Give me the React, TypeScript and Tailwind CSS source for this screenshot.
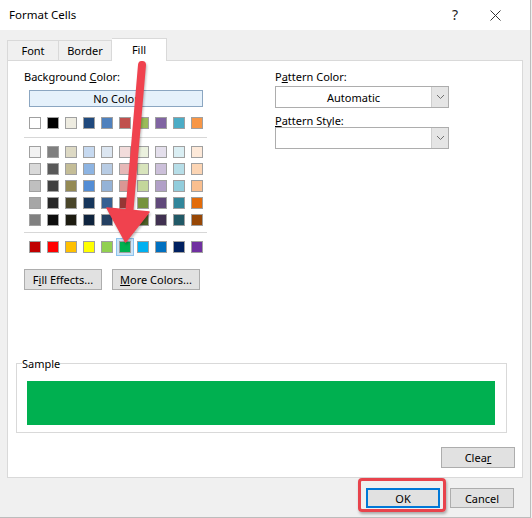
import React from 'react';

const themeRow = [
  'bg-[#ffffff]', 'bg-[#000000]', 'bg-[#eeece1]', 'bg-[#1f497d]', 'bg-[#4f81bd]',
  'bg-[#c0504d]', 'bg-[#9bbb59]', 'bg-[#8064a2]', 'bg-[#4bacc6]', 'bg-[#f79646]',
];

const tintRows = [
  ['bg-[#f2f2f2]', 'bg-[#7f7f7f]', 'bg-[#ddd9c4]', 'bg-[#c6d9f0]', 'bg-[#dce6f1]', 'bg-[#f2dcdb]', 'bg-[#ebf1de]', 'bg-[#e4dfec]', 'bg-[#daeef3]', 'bg-[#fde9d9]'],
  ['bg-[#d9d9d9]', 'bg-[#595959]', 'bg-[#c4bd97]', 'bg-[#8db4e2]', 'bg-[#b8cce4]', 'bg-[#e6b8b7]', 'bg-[#d8e4bc]', 'bg-[#ccc0da]', 'bg-[#b7dee8]', 'bg-[#fcd5b4]'],
  ['bg-[#bfbfbf]', 'bg-[#404040]', 'bg-[#948a54]', 'bg-[#538dd5]', 'bg-[#95b3d7]', 'bg-[#da9694]', 'bg-[#c4d79b]', 'bg-[#b1a0c7]', 'bg-[#92cddc]', 'bg-[#fabf8f]'],
  ['bg-[#a6a6a6]', 'bg-[#262626]', 'bg-[#494529]', 'bg-[#16365c]', 'bg-[#366092]', 'bg-[#963634]', 'bg-[#76933c]', 'bg-[#60497a]', 'bg-[#31869b]', 'bg-[#e26b0a]'],
  ['bg-[#808080]', 'bg-[#0d0d0d]', 'bg-[#1d1b10]', 'bg-[#0f243e]', 'bg-[#244062]', 'bg-[#632523]', 'bg-[#4f6228]', 'bg-[#403151]', 'bg-[#215967]', 'bg-[#974706]'],
];

const standardRow = [
  'bg-[#c00000]', 'bg-[#ff0000]', 'bg-[#ffc000]', 'bg-[#ffff00]', 'bg-[#92d050]',
  'bg-[#00b050]', 'bg-[#00b0f0]', 'bg-[#0070c0]', 'bg-[#002060]', 'bg-[#7030a0]',
];

const Swatch = ({ color, selected }: { color: string; selected?: boolean }) => (
  <div
    className={`w-[12px] h-[12px] border border-[#a0a0a0] ${color} ${
      selected ? 'shadow-[0_0_0_2px_#cce4f7,0_0_0_3px_#8cc3ee]' : ''
    }`}
  />
);

const SwatchRow = ({ colors, selectedIndex }: { colors: string[]; selectedIndex?: number }) => (
  <div className="flex gap-[6px]">
    {colors.map((c, i) => (
      <Swatch key={i} color={c} selected={i === selectedIndex} />
    ))}
  </div>
);

const Chevron = () => (
  <svg width="9" height="6" viewBox="0 0 9 6">
    <polyline points="1,1 4.5,4.5 8,1" fill="none" stroke="#707070" strokeWidth="1" />
  </svg>
);

const Combo = ({ value }: { value?: string }) => (
  <div className="flex w-[174px] h-[22px] border border-[#adadad] bg-white">
    <div className="flex-1 flex items-center justify-center leading-none">{value}</div>
    <div className="w-[17px] flex items-center justify-center bg-[#e5e5e5] border-l border-[#cfcfcf]">
      <Chevron />
    </div>
  </div>
);

const WinButton = ({ children, className = '' }: { children: React.ReactNode; className?: string }) => (
  <button
    className={`h-[21px] flex items-center justify-center bg-[#e1e1e1] border border-[#adadad] leading-none ${className}`}
  >
    {children}
  </button>
);

export default function App() {
  return (
    <div className="relative w-[532px] h-[518px] overflow-hidden bg-[#f0f0f0] font-['Noto_Sans',sans-serif] text-[11px] text-black">
      <div className="flex flex-col w-[531px] h-[518px] border-r border-b border-[#bcbcbc]">
        {/* Title bar */}
        <div className="flex items-center h-[30px] bg-white pl-[9px]">
          <span className="text-[11.5px]">Format Cells</span>
          <span className="ml-auto text-[14px] leading-none text-[#222]">?</span>
          <div className="w-[72px] flex justify-center pl-[2px]">
            <svg width="11" height="11" viewBox="0 0 11 11">
              <path d="M0.5 0.5 L10.5 10.5 M10.5 0.5 L0.5 10.5" stroke="#333" strokeWidth="1" />
            </svg>
          </div>
        </div>

        <div className="flex flex-col px-[7px] pt-[8px]">
          {/* Tabs */}
          <div className="flex items-end h-[22px] relative z-10">
            <div className="w-[52px] h-[20px] border border-b-0 border-[#d9d9d9] flex items-center justify-center pt-[1px]">Font</div>
            <div className="w-[53px] h-[20px] border border-b-0 border-l-0 border-[#d9d9d9] flex items-center justify-center pt-[1px]">Border</div>
            <div className="w-[55px] h-[23px] -mb-px border border-b-0 border-l-0 border-[#d9d9d9] bg-white flex items-center justify-center">Fill</div>
          </div>

          {/* Panel */}
          <div className="flex flex-col w-[516px] h-[418px] border border-[#d9d9d9] bg-white">
            <div className="flex pl-[16px] pt-[9px]">
              {/* Left column */}
              <div className="flex flex-col w-[184px]">
                <div className="leading-[13px] h-[13px]">
                  Background <span className="underline">C</span>olor:
                </div>
                <div className="mt-[7px] ml-[5px] w-[174px] h-[17px] flex items-center justify-center bg-[#e5f1fb] border border-[#8ba6c1] leading-none">
                  No Color
                </div>
                <div className="mt-[10px] ml-[5px]">
                  <SwatchRow colors={themeRow} />
                </div>
                <div className="mt-[8px] h-px w-[183px] bg-[#d7d7d7]" />
                <div className="mt-[8px] ml-[5px] flex flex-col gap-[5px]">
                  {tintRows.map((row, i) => (
                    <SwatchRow key={i} colors={row} />
                  ))}
                </div>
                <div className="mt-[6px] h-px w-[183px] bg-[#d7d7d7]" />
                <div className="mt-[8px] ml-[5px]">
                  <SwatchRow colors={standardRow} selectedIndex={5} />
                </div>
                <div className="mt-[16px] flex gap-[10px]">
                  <WinButton className="w-[78px]">
                    F<span className="underline">i</span>ll Effects...
                  </WinButton>
                  <WinButton className="w-[88px]">
                    <span className="underline">M</span>ore Colors...
                  </WinButton>
                </div>
              </div>

              {/* Right column */}
              <div className="flex flex-col ml-[67px]">
                <div className="leading-[13px] h-[13px]">
                  P<span className="underline">a</span>ttern Color:
                </div>
                <div className="mt-[3px]">
                  <Combo value="Automatic" />
                </div>
                <div className="mt-[6px] leading-[13px] h-[13px]">
                  <span className="underline">P</span>attern Style:
                </div>
                <div className="mt-0">
                  <Combo />
                </div>
              </div>
            </div>

            {/* Sample */}
            <fieldset className="mt-auto ml-[8px] w-[491px] border border-[#d9d9d9] pl-[10px] pr-[11px] pb-[7px] pt-[11px]">
              <legend className="-ml-[5px] leading-[13px]">Sample</legend>
              <div className="h-[44px] bg-[#00b050]" />
            </fieldset>
            <div className="flex justify-end mt-[14px] mb-[9px] pr-[7px]">
              <WinButton className="w-[74px]">
                Clea<span className="underline">r</span>
              </WinButton>
            </div>
          </div>

          {/* Dialog buttons */}
          <div className="flex justify-end gap-[10px] mt-[10px] pr-[9px]">
            <div className="relative">
              <button className="w-[74px] h-[20px] flex items-center justify-center bg-[#e1e1e1] border-2 border-[#0078d7] leading-none">
                OK
              </button>
              <div className="absolute -left-[8px] -top-[10px] w-[88px] h-[34px] rounded-[4px] border-[3px] border-[#e8434c] shadow-[1px_2px_3px_rgba(0,0,0,0.3)] pointer-events-none" />
            </div>
            <button className="w-[64px] h-[20px] flex items-center justify-center bg-[#e1e1e1] border border-[#adadad] leading-none">
              Cancel
            </button>
          </div>
        </div>
      </div>

      {/* Annotation arrow */}
      <svg
        className="absolute inset-0 pointer-events-none drop-shadow-[1px_2px_1px_rgba(0,0,0,0.25)]"
        width="532"
        height="518"
        viewBox="0 0 532 518"
      >
        <line x1="142" y1="65" x2="129.5" y2="210" stroke="#f0424e" strokeWidth="8" strokeLinecap="round" />
        <polygon points="107,208 149,212 125.5,242" fill="#f0424e" stroke="#f0424e" strokeWidth="1.5" strokeLinejoin="round" />
      </svg>
    </div>
  );
}
